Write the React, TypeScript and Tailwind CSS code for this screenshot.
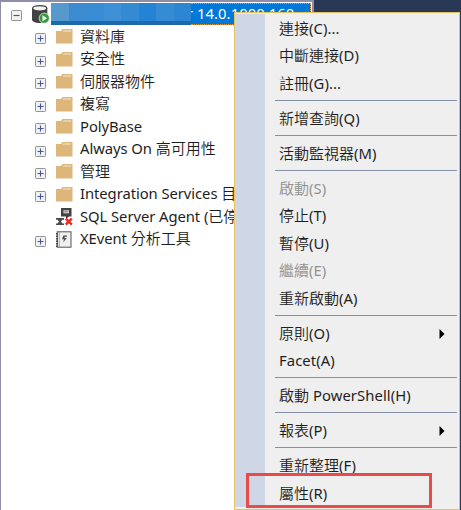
import React from "react";

const tree = [
  { label: "資料庫" },
  { label: "安全性" },
  { label: "伺服器物件" },
  { label: "複寫" },
  { label: "PolyBase" },
  { label: "Always On 高可用性" },
  { label: "管理" },
  { label: "Integration Services 目錄" },
  { label: "SQL Server Agent (已停用)", icon: "agent" },
  { label: "XEvent 分析工具", icon: "xevent" },
];

type Entry = { label: string; disabled?: boolean; sub?: boolean };

const groups: Entry[][] = [
  [{ label: "連接(C)..." }, { label: "中斷連接(D)" }, { label: "註冊(G)..." }],
  [{ label: "新增查詢(Q)" }],
  [{ label: "活動監視器(M)" }],
  [
    { label: "啟動(S)", disabled: true },
    { label: "停止(T)" },
    { label: "暫停(U)" },
    { label: "繼續(E)", disabled: true },
    { label: "重新啟動(A)" },
  ],
  [{ label: "原則(O)", sub: true }, { label: "Facet(A)" }],
  [{ label: "啟動 PowerShell(H)" }],
  [{ label: "報表(P)", sub: true }],
  [{ label: "重新整理(F)" }, { label: "屬性(R)" }],
];

const mosaic = [
  "bg-[#5599cd]",
  "bg-[#3c8bd0]",
  "bg-[#398bd3]",
  "bg-[#3f91d7]",
  "bg-[#348ad3]",
  "bg-[#2484d3]",
  "bg-[#368bd5]",
  "bg-[#2c86d2]",
];

function Toggle({ open }: { open?: boolean }) {
  return (
    <svg width="11" height="11" viewBox="0 0 11 11" className="shrink-0">
      <rect x=".5" y=".5" width="10" height="10" rx=".8" fill="#f1f1f1" stroke="#929292" />
      <path d={open ? "M2.5 5.5h6" : "M2.5 5.5h6M5.5 2.5v6"} stroke="#40579b" strokeWidth="1.1" />
    </svg>
  );
}

function Folder() {
  return (
    <svg width="17" height="15" viewBox="0 0 17 15">
      <path d="M0 2h5L6.5 0H16.5v14.5H0z" fill="#dcb67a" />
      <path d="M6.8 2.4l.6-1h7.8v1z" fill="#f6e7cd" />
    </svg>
  );
}

function Agent() {
  return (
    <svg width="17" height="18" viewBox="0 0 17 18" className="shrink-0">
      <path d="M5 0h10.5v8.5H13L10 11V8.5H5z" fill="#424242" />
      <path d="M7.5 2.3H13v3H7.5z" fill="#e8e8e8" />
      <path d="M8 3.8h4.5" stroke="#555" strokeWidth=".8" />
      <path d="M0 10h8v1.7H6.5L5 13.5l1.5 2H8V17H0v-1.5h1.5l1.5-2-1.5-1.8H0z" fill="#4b4b4b" />
      <path d="M9.8 10.6l6 6M15.8 10.6l-6 6" stroke="#e82c24" strokeWidth="2.5" />
    </svg>
  );
}

function XEvent() {
  return (
    <svg width="16" height="17" viewBox="0 0 16 17">
      <rect x="1.2" y=".8" width="13.8" height="15.4" fill="#f0f0f0" stroke="#555" strokeWidth="1" />
      <path d="M1 2v14" stroke="#444" strokeWidth="1.8" strokeDasharray="1.5 1" />
      <path d="M3.3 1v15" stroke="#888" strokeWidth=".7" />
      <path d="M7.4 4.4H11v1.3H8.8l-.5 1.2h2.5L7.1 11.6l1-3.3H6z" fill="#4a4a4a" />
    </svg>
  );
}

function Server() {
  return (
    <svg width="18" height="19" viewBox="0 0 18 19" className="shrink-0">
      <path d="M0 3v11.5C0 16.5 3.3 18 7.7 18s7.6-1.5 7.6-3.5V3z" fill="#424242" />
      <ellipse cx="7.7" cy="3.3" rx="7.1" ry="2.7" fill="#f3f3f3" stroke="#424242" strokeWidth="1.2" />
      <circle cx="12.2" cy="13.2" r="5.1" fill="#38983b" stroke="#dceadb" strokeWidth=".8" />
      <path d="M10.5 10.2v6l4.5-3z" fill="#fff" />
    </svg>
  );
}

/* Splits a label so that ideographs and Latin letters keep their own metrics. */
function Label({ text, latin }: { text: string; latin: string }) {
  const parts = text.match(/[\u3400-\u9fff]+|[^\u3400-\u9fff]+/g) ?? [];
  return (
    <span className="flex whitespace-pre">
      {parts.map((p, i) =>
        /[\u3400-\u9fff]/.test(p) ? (
          <span key={i} className="font-['Noto_Sans_CJK_TC',sans-serif] text-[15px] font-[350]">{p}</span>
        ) : (
          <span key={i} className={`font-['Noto_Sans','Noto_Sans_CJK_TC',sans-serif] ${latin}`}>{p}</span>
        ),
      )}
    </span>
  );
}

export default function App() {
  return (
    <div className="relative flex h-[510px] w-[461px] overflow-hidden bg-[#293955] font-['Noto_Sans','Noto_Sans_CJK_TC',sans-serif] leading-[22px] text-[#1e1e1e]">
      <div className="flex w-[314px] flex-col border-t-2 border-r-2 border-l border-[#8e8fa6] bg-white">
        <div className="flex h-6 items-center pl-[10px]">
          <span className="mt-[2px] flex"><Toggle open /></span>
          <span className="mt-px ml-[10px] flex"><Server /></span>
          <div className="ml-px flex h-[22px] w-[140px] shrink-0">
            {mosaic.map((c, i) => (
              <div key={i} className={`h-full flex-1 border-b-4 border-[#1d69ac] ${c}`} />
            ))}
          </div>
          <div className="flex h-[22px] w-[120px] items-center overflow-hidden border-y border-r border-dotted border-[#e89b4b] bg-[#0078d7] text-white">
            <span className="-ml-[4px] whitespace-pre pb-[2px] text-[14.8px] tracking-[0.05px]">r 14.0.1000.160</span>
          </div>
        </div>
        <div className="flex flex-col pl-[34px]">
          {tree.map((n) => (
            <div key={n.label} className="flex h-[22.5px] items-center whitespace-nowrap">
              <span className="mt-[3px] w-[11px]">{n.icon !== "agent" && <Toggle />}</span>
              <span className="mr-[7px] mb-px ml-[10px] flex w-[17px]">
                {n.icon === "agent" ? <Agent /> : n.icon === "xevent" ? <XEvent /> : <Folder />}
              </span>
              <span className="mb-[3px]">
                <Label text={n.label} latin="text-[14.8px] tracking-[-0.06px]" />
              </span>
            </div>
          ))}
        </div>
      </div>

      <div className="absolute top-3 left-[234px] flex h-[498px] w-[226px] border border-[#e5c365] bg-[#efefef]">
        <div className="mt-px mb-[2px] w-[30px] shrink-0 bg-[#cfd6e5]" />
        <div className="flex flex-1 flex-col pt-px">
          {groups.map((g, gi) => (
            <React.Fragment key={gi}>
              {gi > 0 && (
                <div className="flex h-[7.4px] items-center pr-[2px] pl-[10px]">
                  <div className="h-px w-full bg-[#8491a7]" />
                </div>
              )}
              {g.map((m) => (
                <div
                  key={m.label}
                  className={`flex h-[27.56px] items-center justify-between pr-[14px] pl-[14px] ${m.disabled ? "text-[#929292]" : ""}`}
                >
                  <Label text={m.label} latin="text-[14.8px] tracking-[0.08px]" />
                  {m.sub && (
                    <svg width="6" height="10" viewBox="0 0 6 10" className="mt-[2px]">
                      <path d="M.5 0L5.5 5 .5 10z" fill="#000" />
                    </svg>
                  )}
                </div>
              ))}
            </React.Fragment>
          ))}
        </div>
      </div>
      <div className="absolute top-[473px] left-[246px] h-[35px] w-[186px] border-[3px] border-[#e94c48]" />
    </div>
  );
}
